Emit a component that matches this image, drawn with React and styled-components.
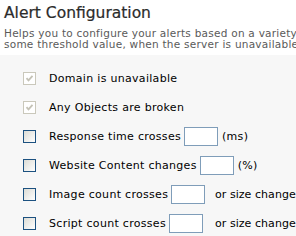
import styled, { createGlobalStyle } from "styled-components";

const GlobalStyle = createGlobalStyle`
  body {
    margin: 0;
    background: #ffffff;
    font-family: "DejaVu Sans", Verdana, sans-serif;
    overflow: hidden;
  }
`;

const Page = styled.div`
  width: 296px;
  height: 236px;
  overflow: hidden;
`;

const Header = styled.header`
  padding: 3px 4px 5px;
  white-space: nowrap;

  h1 {
    margin: 0;
    font-size: 15.5px;
    font-weight: normal;
    line-height: 20px;
    color: #2b2b2b;
    -webkit-text-stroke: 0.2px #2b2b2b;
  }

  p {
    margin: 5px 0 0;
    font-size: 10.5px;
    line-height: 11px;
    color: #5a5a5a;
    letter-spacing: 0.25px;
  }
`;

const Panel = styled.section`
  background: #f7f7f7;
  padding: 9px 0 0 23px;
  height: 200px;
`;

const Row = styled.label`
  display: flex;
  align-items: center;
  height: 29px;
  font-size: 11px;
  letter-spacing: 0.3px;
  color: #000;
  white-space: nowrap;
`;

const Check = styled.input.attrs({ type: "checkbox" })`
  appearance: none;
  width: 13px;
  height: 13px;
  margin: 0 13px 0 0;
  flex: none;
  border: 1px solid #1c5180;
  background: linear-gradient(135deg, #dcdcd5 0%, #f4f4f2 70%, #ffffff 100%);

  &:disabled {
    border-color: #cac8bb;
    background: #ffffff
      url("data:image/svg+xml,%3Csvg xmlns='http://www.w3.org/2000/svg' width='11' height='11'%3E%3Cpath d='M2.5 5.2l2 2.2 4-4.6' fill='none' stroke='%23c4c2b6' stroke-width='1.8'/%3E%3C/svg%3E")
      center / 11px 11px no-repeat;
  }
`;

const Group = styled.span`
  display: inline-flex;
  align-items: center;
  min-width: ${({ $width }) => ($width ? `${$width}px` : "auto")};
`;

const Extra = styled.span`
  letter-spacing: 0.05px;
`;

const Field = styled.input.attrs({ type: "text" })`
  width: 32px;
  height: 17px;
  margin: 0 ${({ $after }) => $after}px 0 3px;
  padding: 0;
  border: 1px solid #7f9db9;
  background: #fff;
  box-sizing: content-box;
`;

const rows = [
  { id: 1, label: "Domain is unavailable", locked: true },
  { id: 2, label: "Any Objects are broken", locked: true },
  { id: 3, label: "Response time crosses", unit: "(ms)" },
  { id: 4, label: "Website Content changes", unit: "(%)" },
  { id: 5, label: "Image count crosses", extra: "or size change" },
  { id: 6, label: "Script count crosses", extra: "or size change" },
];

export default function App() {
  return (
    <Page>
      <GlobalStyle />
      <Header>
        <h1>Alert Configuration</h1>
        <p>
          Helps you to configure your alerts based on a variety of conditions
          <br />
          some threshold value, when the server is unavailable or objects are
        </p>
      </Header>
      <Panel>
        {rows.map(({ id, label, locked, unit, extra }) => (
          <Row key={id}>
            <Check disabled={locked} defaultChecked={locked} />
            {locked ? (
              label
            ) : (
              <>
                <Group $width={extra ? 166 : 0}>
                  {label}
                  <Field $after={unit ? 4 : 0} />
                  {unit}
                </Group>
                {extra && <Extra>{extra}</Extra>}
              </>
            )}
          </Row>
        ))}
      </Panel>
    </Page>
  );
}
